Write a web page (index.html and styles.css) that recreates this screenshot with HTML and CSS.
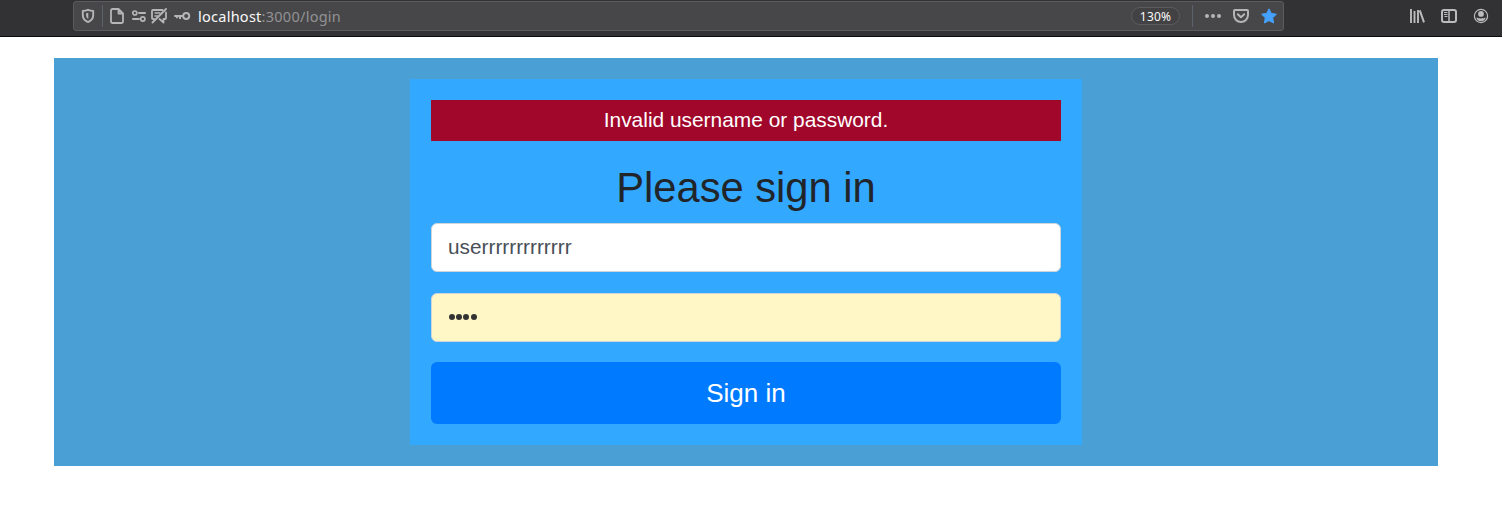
FILE: index.html
```html
<!DOCTYPE html>
<html lang="en">
<head>
<meta charset="utf-8">
<title>Login</title>
<link rel="stylesheet" href="styles.css">
</head>
<body>
<header class="toolbar">
  <div class="urlbar">
    <svg class="icon shield" width="16" height="16" viewBox="0 0 16 16"><path d="M8 1.800c1.700.7 3.300 1 5.200 1.100v4.200c0 3.300-1.900 5.700-5.200 7-3.300-1.300-5.200-3.700-5.200-7V2.900C4.700 2.800 6.300 2.500 8 1.800z" fill="none" stroke="currentColor" stroke-width="1.900" stroke-linejoin="round"/><path d="M8.300 4.800v6.400C6.900 10.200 6.100 8.800 6.100 7V5.300c.8-.1 1.500-.3 2.200-.5z" fill="currentColor"/></svg>
    <span class="divider"></span>
    <svg class="icon page" width="16" height="16" viewBox="0 0 16 16"><path d="M3.500 1h6L14 5.500V13.500a1.500 1.500 0 0 1-1.500 1.500h-9A1.500 1.500 0 0 1 2 13.500v-11A1.500 1.500 0 0 1 3.500 1zM9.500 1v4.500H14" fill="none" stroke="currentColor" stroke-width="1.800" stroke-linejoin="round"/></svg>
    <svg class="icon permissions" width="16" height="16" viewBox="0 0 16 16"><g fill="none" stroke="currentColor" stroke-width="1.700"><circle cx="3.800" cy="5" r="2"/><circle cx="11.800" cy="11" r="2.100"/><path d="M8 5h6M2 11h6" stroke-width="2" stroke-linecap="round"/></g></svg>
    <svg class="icon chat" width="18" height="16" viewBox="0 0 18 16"><g fill="none" stroke="currentColor" stroke-width="1.800" stroke-linecap="round" stroke-linejoin="round"><path d="M12.500 2H3a1 1 0 0 0-1 1v7a1 1 0 0 0 1 1h1M16 4.500V10a1 1 0 0 1-1 1h-1.500v3.500L9.500 11"/><path d="M16 1L2.500 14.500"/><path d="M5 5h5M5 8h3" stroke-width="1.300"/></g></svg>
    <svg class="icon key" width="18" height="16" viewBox="0 0 18 16"><circle cx="13.200" cy="8" r="3" fill="none" stroke="currentColor" stroke-width="2"/><path d="M2 7h8.500v2H8v2H6V9H4.800v1.300H3V9H2a1 1 0 0 1 0-2z" fill="currentColor"/></svg>
    <span class="url"><span class="host">localhost</span>:3000/login</span>
    <span class="zoom">130%</span>
    <span class="divider end"></span>
    <svg class="icon dots" width="18" height="16" viewBox="0 0 18 16" fill="currentColor"><circle cx="3" cy="8" r="2"/><circle cx="9" cy="8" r="2"/><circle cx="15" cy="8" r="2"/></svg>
    <svg class="icon pocket" width="18" height="16" viewBox="0 0 18 16" fill="none" stroke="currentColor" stroke-width="2" stroke-linecap="round" stroke-linejoin="round"><path d="M3 2h12a1 1 0 0 1 1 1v4a7 7 0 0 1-14 0V3a1 1 0 0 1 1-1z"/><path d="M5.800 6.300L9 9.300l3.200-3"/></svg>
    <svg class="icon star" width="18" height="18" viewBox="0 0 18 18"><path d="M9 1.800l2.300 4.600 5.100.8-3.700 3.600.9 5.200L9 13.600 4.400 16l.9-5.200-3.700-3.600 5.100-.8z" fill="currentColor" stroke="currentColor" stroke-width="1" stroke-linejoin="round"/></svg>
  </div>
  <nav class="tools">
    <svg width="16" height="16" viewBox="0 0 16 16" fill="none" stroke="currentColor" stroke-width="2"><path d="M2 1v14M5.500 3v12M9 2v13" stroke-width="1.900"/><path d="M10.800 2.300L15 14.300"/></svg>
    <svg width="16" height="16" viewBox="0 0 16 16" fill="none" stroke="currentColor"><rect x="1" y="2" width="14" height="12" rx="2" stroke-width="2"/><path d="M8 2v12" stroke-width="1.500"/><path d="M3 4.500h3.500M3 6.500h3.500M3.500 8.500h3" stroke-width="1"/></svg>
    <svg width="16" height="16" viewBox="0 0 16 16"><circle cx="8" cy="8" r="6.600" fill="none" stroke="currentColor" stroke-width="1.200"/><circle cx="8" cy="5.900" r="2.900" fill="currentColor"/><path d="M3.500 9.200c1 .8 2.600 1.200 4.500 1.200s3.500-.4 4.500-1.200c0 2.500-2 4.100-4.500 4.100s-4.500-1.600-4.500-4.100z" fill="currentColor"/></svg>
  </nav>
</header>
<main class="page-body">
  <form class="card">
    <div class="alert">Invalid username or password.</div>
    <h1 class="title">Please sign in</h1>
    <input class="field" type="text" value="userrrrrrrrrrrrr" aria-label="Username">
    <div class="field autofilled" aria-label="Password"><i></i><i></i><i></i><i></i></div>
    <button class="submit" type="button">Sign in</button>
  </form>
</main>
</body>
</html>
```
FILE: styles.css
```css
* { box-sizing: border-box; }
body { margin: 0; background: #fff; font-family: "Liberation Sans", Arial, sans-serif; color: #212529; }
svg { display: block; flex: none; }
.toolbar { height: 37px; background: #323234; border-bottom: 1px solid #0c0c0d; display: flex; align-items: flex-start; padding: 1px 13px 0 73px; }
.urlbar { width: 1211px; height: 30px; background: #474749; border: 1px solid #5b5b5d; border-radius: 3px; display: flex; align-items: center; padding-left: 6px; color: #b5b5b7; }
.divider { width: 1px; height: 22px; margin: 0 6px 0 6px; background: #5c626d; }
.permissions { margin-left: 6px; }
.chat { margin-left: 3px; }
.key { margin-left: 5px; }
.url { margin-left: 7px; width: 160px; padding-bottom: 1px; font: 14.5px/20px "Noto Sans", sans-serif; letter-spacing: .26px; color: #929294; white-space: nowrap; }
.host { color: #f9f9fa; }
.zoom { margin-left: auto; width: 49px; height: 18px; border: 1px solid #5b5b5d; border-radius: 9px; background: #424244; color: #f9f9fa; font: 12px/17px "Noto Sans", sans-serif; letter-spacing: .2px; text-align: center; }
.divider.end { margin: 0 11px 0 12px; }
.pocket { margin-left: 10px; }
.star { margin: 0 5px 0 10px; color: #45a1ff; }
.tools { margin-left: auto; display: flex; gap: 16px; padding-top: 7px; color: #bbbbbd; }
.page-body { margin: 21px 64px 0 54px; height: 408px; background: #4aa0d5; padding-top: 21px; }
.card { width: 672px; height: 366px; margin: 0 auto; background: #33a8ff; padding: 21px; display: flex; flex-direction: column; }
.alert { height: 41px; background: #a0072b; color: #fff; font-size: 20.9px; line-height: 40px; text-align: center; }
.title { margin: 22px 0 10px; height: 50px; font-size: 41.7px; line-height: 50px; font-weight: 400; text-align: center; }
.field { width: 100%; height: 49px; flex: none; margin: 0 0 21px; padding: 0 16px 2px; border: 1px solid #ced4da; border-radius: 6px; background: #fff; color: #495057; font: 20.8px "Liberation Sans", Arial, sans-serif; }
.autofilled { background: #fff7c5; margin-bottom: 20px; padding: 0 16px 1px 16.5px; display: flex; align-items: center; gap: 1.4px; }
.autofilled i { width: 6px; height: 6px; border-radius: 50%; background: #333; }
.submit { height: 62px; flex: none; padding: 0; border: 0; border-radius: 6px; background: #007bff; color: #fff; font: 26px/62px "Liberation Sans", Arial, sans-serif; }
```
